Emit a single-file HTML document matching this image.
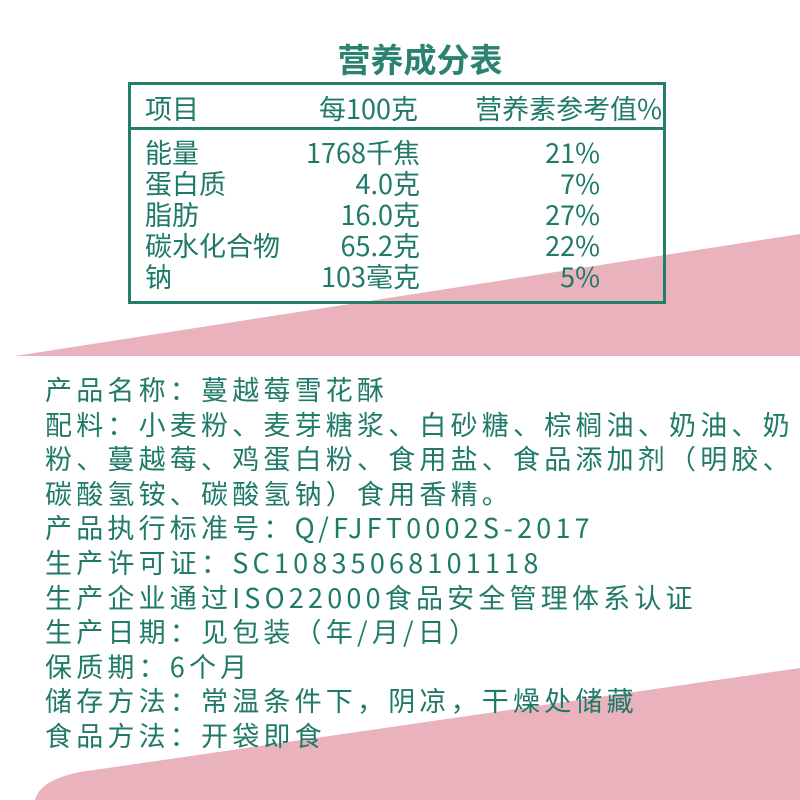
<!DOCTYPE html>
<html><head><meta charset="utf-8"><style>
body{margin:0;width:800px;height:800px;background:#fff;position:relative;overflow:hidden;font-family:"Liberation Sans","Noto Sans CJK SC",sans-serif;color:#1f7a68}
svg{position:absolute;left:0;top:0}
h1{position:absolute;left:0;width:840px;top:34px;margin:0;text-align:center;font-size:33px;font-weight:bold;color:#2a8270;font-family:"Noto Sans CJK SC",sans-serif}
.box{position:absolute;left:128px;top:82px;width:532px;height:216px;border:3px solid #237e6c}
.hl{position:absolute;left:128px;top:127px;width:538px;height:3px;background:#237e6c}
.r{position:absolute;font-size:27px;line-height:31px;font-family:"Noto Sans CJK SC",sans-serif}
.p{position:absolute;left:45px;font-size:27px;line-height:34.6px;font-family:"Noto Sans CJK SC",sans-serif;top:372px;letter-spacing:4.2px;white-space:nowrap}
</style></head><body>
<svg width="800" height="800"><path d="M15 356 L800 234 L800 356 Z" fill="#e9b2bc"/><path d="M35 800 Q40 780 80 772 L800 668 L800 800 Z" fill="#e9b2bc"/></svg>
<h1>营养成分表</h1>
<div class="box"></div><div class="hl"></div>
<div class="r" style="left:145px;top:92px">项目</div>
<div class="r" style="left:300px;width:118px;text-align:right;top:92px">每100克</div>
<div class="r" style="left:470px;width:192px;text-align:right;top:92px">营养素参考值%</div>
<div class="r" style="left:145px;top:136px">能量<br>蛋白质<br>脂肪<br>碳水化合物<br>钠</div>
<div class="r" style="left:280px;width:140px;text-align:right;top:136px">1768千焦<br>4.0克<br>16.0克<br>65.2克<br>103毫克</div>
<div class="r" style="left:480px;width:120px;text-align:right;top:136px">21%<br>7%<br>27%<br>22%<br>5%</div>
<div class="p">产品名称：蔓越莓雪花酥<br>配料：小麦粉、麦芽糖浆、白砂糖、棕榈油、奶油、奶<br>粉、蔓越莓、鸡蛋白粉、食用盐、食品添加剂（明胶、<br>碳酸氢铵、碳酸氢钠）食用香精。<br>产品执行标准号：Q/FJFT0002S-2017<br>生产许可证：SC10835068101118<br>生产企业通过ISO22000食品安全管理体系认证<br>生产日期：见包装（年/月/日）<br>保质期：6个月<br>储存方法：常温条件下，阴凉，干燥处储藏<br>食品方法：开袋即食</div>
</body></html>
